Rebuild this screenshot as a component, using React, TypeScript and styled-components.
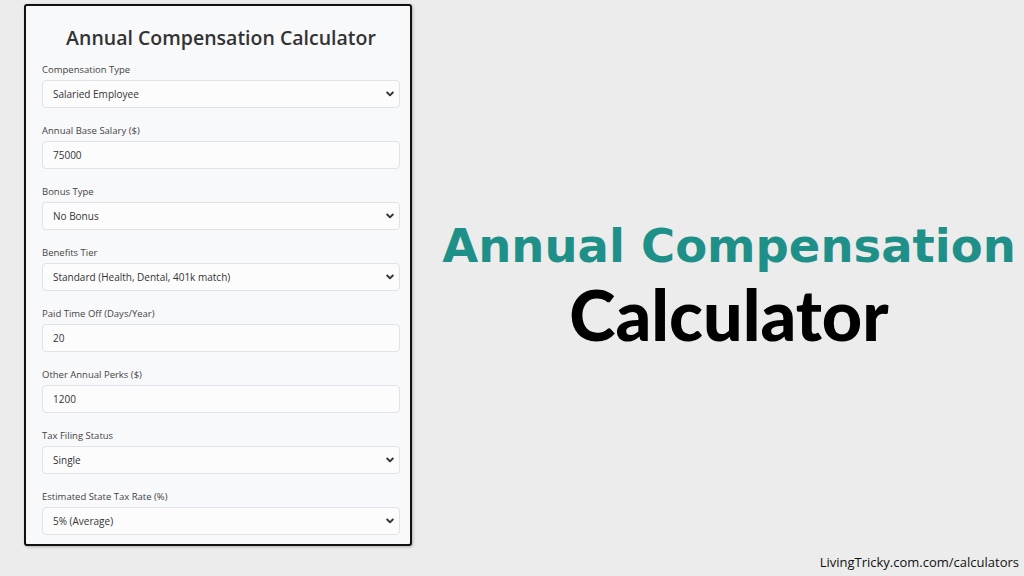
import styled, { createGlobalStyle } from 'styled-components';

const GlobalStyle = createGlobalStyle`
  html, body {
    margin: 0;
    padding: 0;
    background: #ececec;
  }
  * {
    box-sizing: border-box;
  }
`;

const Page = styled.div`
  width: 1024px;
  height: 576px;
  display: flex;
  flex-direction: column;
  overflow: hidden;
  font-family: 'Open Sans', 'Noto Sans', sans-serif;
`;

const Main = styled.div`
  display: flex;
  padding: 4px 0 0 24px;
`;

const Panel = styled.div`
  width: 388px;
  height: 542px;
  background: #f8f9fa;
  border: 2px solid #111;
  border-radius: 3px;
  box-shadow: 1px 1px 3px rgba(0, 0, 0, 0.25);
  padding: 17px 10px 0 16px;
  display: flex;
  flex-direction: column;
`;

const PanelTitle = styled.h1`
  margin: 0 0 10px;
  font-size: 19.5px;
  line-height: 30px;
  font-weight: 600;
  color: #333;
  text-align: center;
`;

const Field = styled.div`
  display: flex;
  flex-direction: column;
  margin-bottom: 16px;
`;

const Label = styled.label`
  font-size: 9.5px;
  line-height: 14px;
  color: #444;
  margin-bottom: 3px;
`;

const Control = styled.div`
  position: relative;
  height: 28px;
  width: 358px;
  background: #fcfcfd;
  border: 1px solid #dfe2e6;
  border-radius: 4px;
  display: flex;
  align-items: center;
  padding-left: 10px;
  font-size: 10px;
  color: #333;
`;

const Chevron = styled.svg`
  position: absolute;
  right: 5px;
  top: 50%;
  transform: translateY(-50%);
`;

const Hero = styled.div`
  flex: 1;
  display: flex;
  flex-direction: column;
  align-items: center;
  padding: 213px 0 0 22px;
`;

const HeroTop = styled.div`
  font-family: 'DejaVu Sans', Inter, sans-serif;
  font-weight: 700;
  font-size: 46.5px;
  line-height: 58px;
  letter-spacing: 0px;
  color: #1f9088;
  white-space: nowrap;
`;

const HeroBottom = styled.div`
  font-family: Lato, 'Noto Sans', sans-serif;
  font-weight: 900;
  font-size: 70px;
  line-height: 78px;
  letter-spacing: 0px;
  color: #000;
  white-space: nowrap;
`;

const Footer = styled.div`
  margin-top: auto;
  padding: 0 5px 3px 0;
  text-align: right;
  font-size: 13px;
  line-height: 22px;
  color: #111;
`;

type FieldDef = { label: string; value: string; select: boolean };

const fields: FieldDef[] = [
  { label: 'Compensation Type', value: 'Salaried Employee', select: true },
  { label: 'Annual Base Salary ($)', value: '75000', select: false },
  { label: 'Bonus Type', value: 'No Bonus', select: true },
  { label: 'Benefits Tier', value: 'Standard (Health, Dental, 401k match)', select: true },
  { label: 'Paid Time Off (Days/Year)', value: '20', select: false },
  { label: 'Other Annual Perks ($)', value: '1200', select: false },
  { label: 'Tax Filing Status', value: 'Single', select: true },
  { label: 'Estimated State Tax Rate (%)', value: '5% (Average)', select: true },
];

export default function App() {
  return (
    <Page>
      <GlobalStyle />
      <Main>
        <Panel>
          <PanelTitle>Annual Compensation Calculator</PanelTitle>
          {fields.map((f) => (
            <Field key={f.label}>
              <Label>{f.label}</Label>
              <Control>
                {f.value}
                {f.select && (
                  <Chevron width="8" height="6" viewBox="0 0 8 6">
                    <path d="M1.2 1.5 L4 4.3 L6.8 1.5" fill="none" stroke="#333" strokeWidth="1.9" strokeLinecap="round" strokeLinejoin="round" />
                  </Chevron>
                )}
              </Control>
            </Field>
          ))}
        </Panel>
        <Hero>
          <HeroTop>Annual Compensation</HeroTop>
          <HeroBottom>Calculator</HeroBottom>
        </Hero>
      </Main>
      <Footer>LivingTricky.com.com/calculators</Footer>
    </Page>
  );
}
